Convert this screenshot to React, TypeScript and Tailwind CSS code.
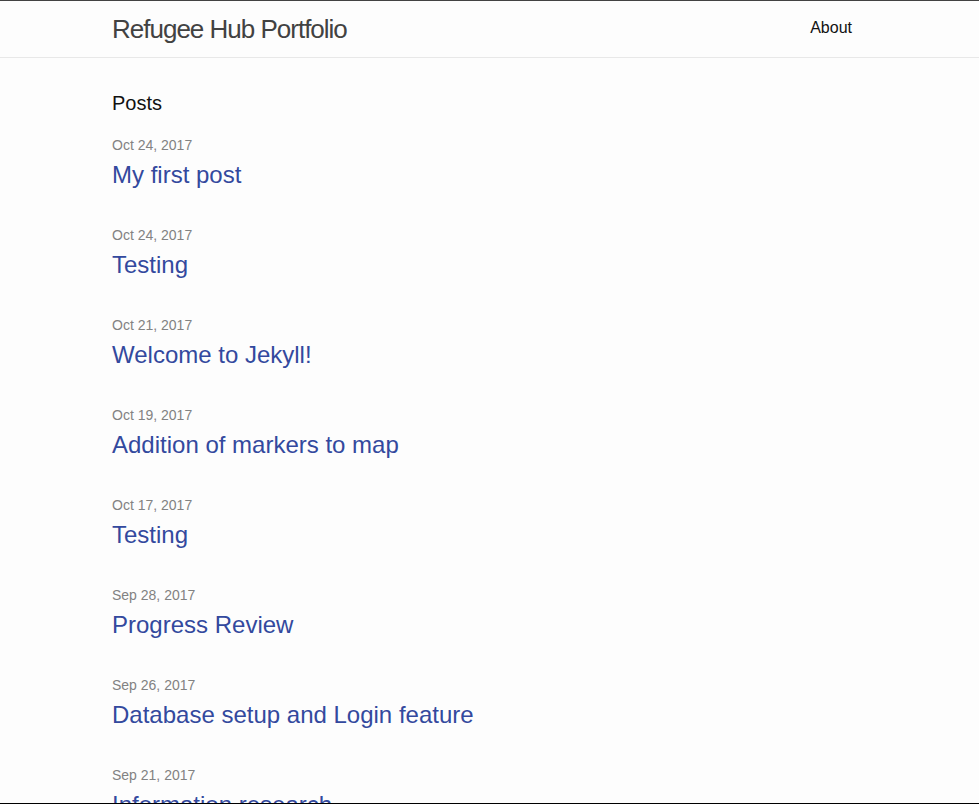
import React from "react";

const posts = [
  { date: "Oct 24, 2017", title: "My first post" },
  { date: "Oct 24, 2017", title: "Testing" },
  { date: "Oct 21, 2017", title: "Welcome to Jekyll!" },
  { date: "Oct 19, 2017", title: "Addition of markers to map" },
  { date: "Oct 17, 2017", title: "Testing" },
  { date: "Sep 28, 2017", title: "Progress Review" },
  { date: "Sep 26, 2017", title: "Database setup and Login feature" },
  { date: "Sep 21, 2017", title: "Information research" },
];

export default function App() {
  return (
    <div
      className="relative h-[804px] w-full overflow-hidden bg-[#fdfdfd] text-[#111]"
      style={{ fontFamily: '"Liberation Sans", Arial, Helvetica, sans-serif' }}
    >
      <header className="border-t border-b border-t-[#424242] border-b-[#e8e8e8] h-[58px]">
        <div className="mx-auto flex w-[755px] items-start justify-between pr-[15px]">
          <a className="text-[26px] leading-[56px] tracking-[-1px] text-[#424242]">
            Refugee Hub Portfolio
          </a>
          <a className="text-[16px] leading-[54px] text-[#111]">About</a>
        </div>
      </header>
      <main className="mx-auto w-[755px] pt-[30px]">
        <h1 className="text-[20px] leading-[30px] mb-[17px] text-[#111]">Posts</h1>
        <ul>
          {posts.map((p, i) => (
            <li key={i} className="mb-[32px]">
              <div className="text-[14px] leading-[21px] text-[#828282]">{p.date}</div>
              <h2 className="mt-[1px] text-[24px] leading-[36px] text-[#33499e]">
                <a>{p.title}</a>
              </h2>
            </li>
          ))}
        </ul>
      </main>
      <div className="absolute bottom-0 left-0 right-0 h-px bg-black" />
    </div>
  );
}
